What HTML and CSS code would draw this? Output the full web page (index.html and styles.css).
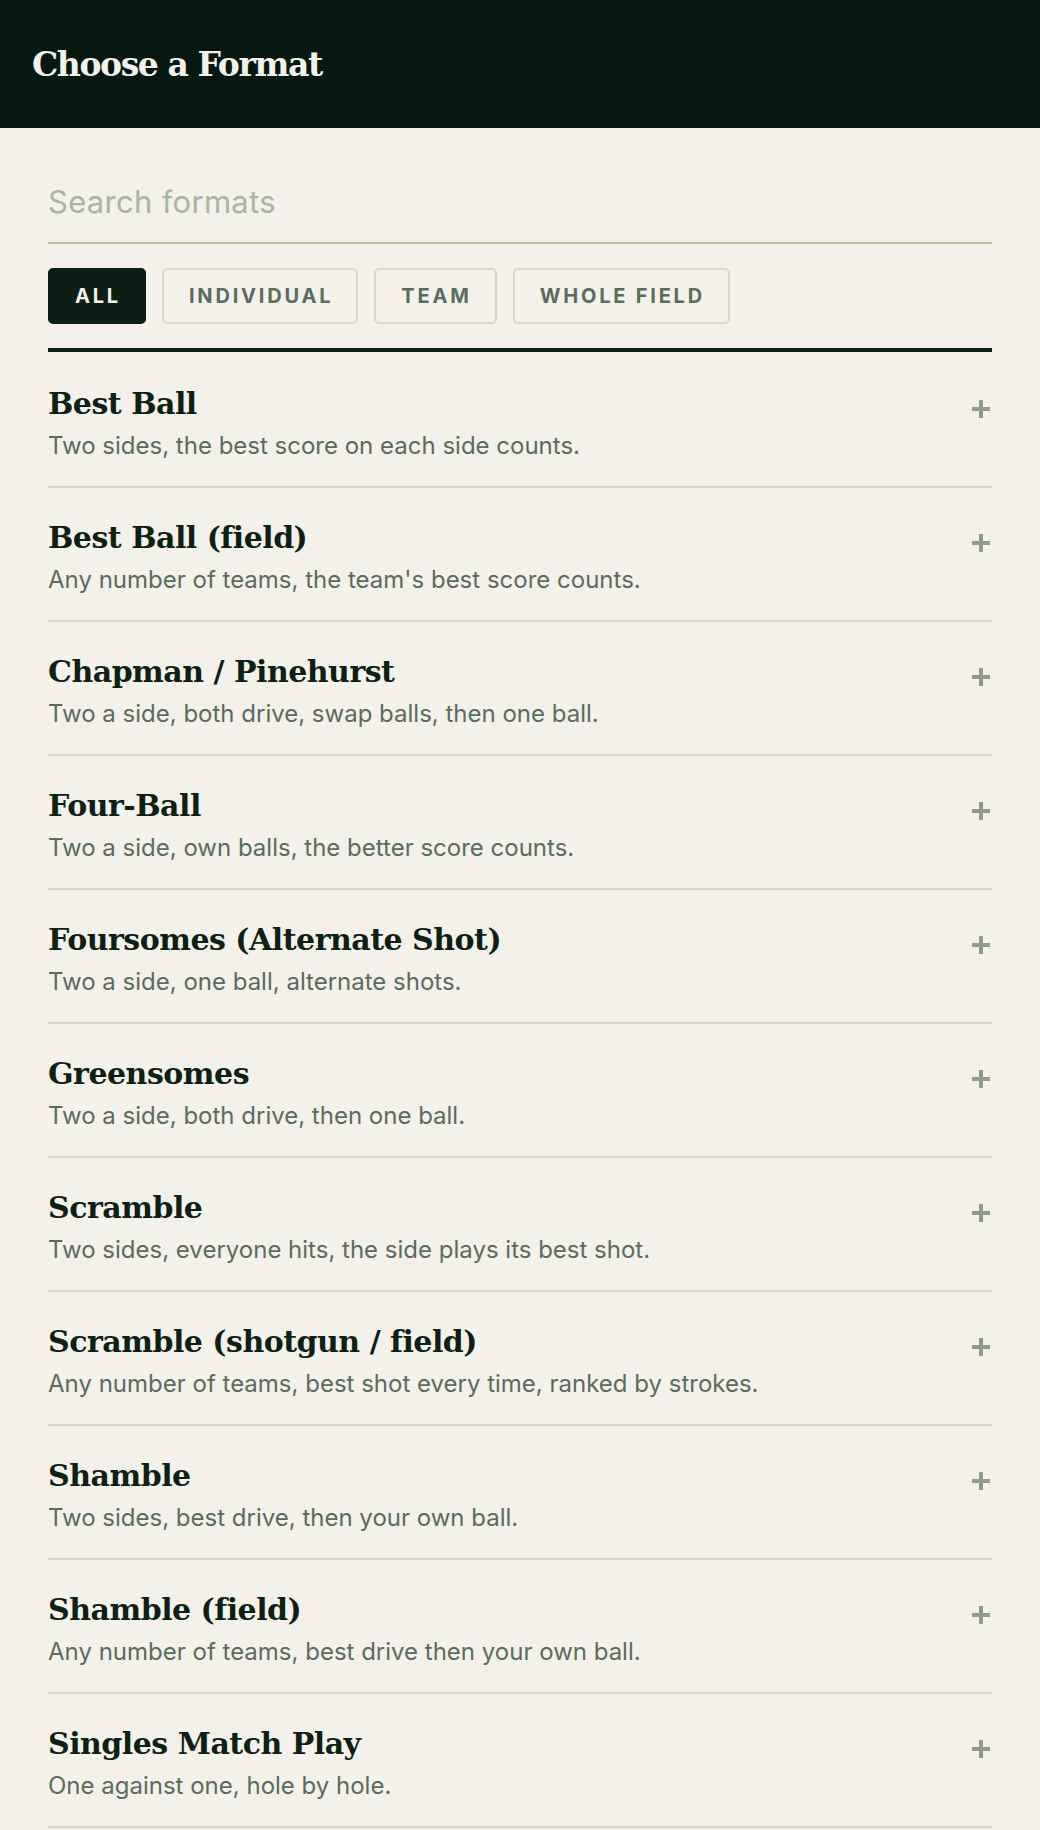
FILE: index.html
```html
<!DOCTYPE html>
<html lang="en">
<head>
  <meta charset="UTF-8">
  <title>Choose a Format</title>
  <link rel="stylesheet" href="styles.css">
</head>
<body>
  <header class="top-bar">
    <h1>Choose a Format</h1>
  </header>

  <main class="page">
    <input class="search" type="text" placeholder="Search formats">

    <div class="filters">
      <button class="chip active">ALL</button>
      <button class="chip">INDIVIDUAL</button>
      <button class="chip">TEAM</button>
      <button class="chip">WHOLE FIELD</button>
    </div>

    <ul class="format-list">
      <li class="format">
        <div class="format-text">
          <h2>Best Ball</h2>
          <p>Two sides, the best score on each side counts.</p>
        </div>
        <svg class="plus" viewBox="0 0 18 18"><rect x="7" y="0" width="4" height="18"/><rect x="0" y="7" width="18" height="4"/></svg>
      </li>
      <li class="format">
        <div class="format-text">
          <h2>Best Ball (field)</h2>
          <p>Any number of teams, the team's best score counts.</p>
        </div>
        <svg class="plus" viewBox="0 0 18 18"><rect x="7" y="0" width="4" height="18"/><rect x="0" y="7" width="18" height="4"/></svg>
      </li>
      <li class="format">
        <div class="format-text">
          <h2>Chapman / Pinehurst</h2>
          <p>Two a side, both drive, swap balls, then one ball.</p>
        </div>
        <svg class="plus" viewBox="0 0 18 18"><rect x="7" y="0" width="4" height="18"/><rect x="0" y="7" width="18" height="4"/></svg>
      </li>
      <li class="format">
        <div class="format-text">
          <h2>Four-Ball</h2>
          <p>Two a side, own balls, the better score counts.</p>
        </div>
        <svg class="plus" viewBox="0 0 18 18"><rect x="7" y="0" width="4" height="18"/><rect x="0" y="7" width="18" height="4"/></svg>
      </li>
      <li class="format">
        <div class="format-text">
          <h2>Foursomes (Alternate Shot)</h2>
          <p>Two a side, one ball, alternate shots.</p>
        </div>
        <svg class="plus" viewBox="0 0 18 18"><rect x="7" y="0" width="4" height="18"/><rect x="0" y="7" width="18" height="4"/></svg>
      </li>
      <li class="format">
        <div class="format-text">
          <h2>Greensomes</h2>
          <p>Two a side, both drive, then one ball.</p>
        </div>
        <svg class="plus" viewBox="0 0 18 18"><rect x="7" y="0" width="4" height="18"/><rect x="0" y="7" width="18" height="4"/></svg>
      </li>
      <li class="format">
        <div class="format-text">
          <h2>Scramble</h2>
          <p>Two sides, everyone hits, the side plays its best shot.</p>
        </div>
        <svg class="plus" viewBox="0 0 18 18"><rect x="7" y="0" width="4" height="18"/><rect x="0" y="7" width="18" height="4"/></svg>
      </li>
      <li class="format">
        <div class="format-text">
          <h2>Scramble (shotgun / field)</h2>
          <p>Any number of teams, best shot every time, ranked by strokes.</p>
        </div>
        <svg class="plus" viewBox="0 0 18 18"><rect x="7" y="0" width="4" height="18"/><rect x="0" y="7" width="18" height="4"/></svg>
      </li>
      <li class="format">
        <div class="format-text">
          <h2>Shamble</h2>
          <p>Two sides, best drive, then your own ball.</p>
        </div>
        <svg class="plus" viewBox="0 0 18 18"><rect x="7" y="0" width="4" height="18"/><rect x="0" y="7" width="18" height="4"/></svg>
      </li>
      <li class="format">
        <div class="format-text">
          <h2>Shamble (field)</h2>
          <p>Any number of teams, best drive then your own ball.</p>
        </div>
        <svg class="plus" viewBox="0 0 18 18"><rect x="7" y="0" width="4" height="18"/><rect x="0" y="7" width="18" height="4"/></svg>
      </li>
      <li class="format">
        <div class="format-text">
          <h2>Singles Match Play</h2>
          <p>One against one, hole by hole.</p>
        </div>
        <svg class="plus" viewBox="0 0 18 18"><rect x="7" y="0" width="4" height="18"/><rect x="0" y="7" width="18" height="4"/></svg>
      </li>
    </ul>
  </main>
</body>
</html>
```

FILE: styles.css
```css
:root {
  --bg: #f3f1e9;
  --ink: #0e1f16;
  --night: #071711;
  --muted: #5b6b5e;
  --line: #dbd5c1;
  --serif: 'DejaVu Serif', 'Liberation Serif', serif;
  --sans: Inter, 'Liberation Sans', sans-serif;
}

* {
  box-sizing: border-box;
}
body {
  margin: 0;
  background: var(--bg);
  color: var(--ink);
  font-family: var(--sans);
}

.top-bar {
  height: 128px;
  background: var(--night);
  display: flex;
  align-items: center;
  padding: 0 32px;
}
.top-bar h1 {
  margin: 0;
  color: var(--bg);
  font-family: var(--serif);
  font-size: 33px;
  font-weight: bold;
  letter-spacing: -1.4px;
}

.page {
  padding: 32px 48px 0;
}

.search {
  display: block;
  width: 100%;
  height: 84px;
  padding: 0;
  border: none;
  border-bottom: 2px solid #c3bda4;
  background: transparent;
  font-family: var(--sans);
  font-size: 31px;
  letter-spacing: 0.3px;
  color: var(--ink);
  outline: none;
}
.search::placeholder {
  color: #aab4a5;
}

.filters {
  display: flex;
  gap: 16px;
  margin-top: 24px;
  padding-bottom: 24px;
  border-bottom: 4px solid #0d1f15;
}
.chip {
  height: 56px;
  padding: 0 23px 0 25px;
  border: 2px solid #ddd6c1;
  border-radius: 5px;
  background: transparent;
  color: var(--muted);
  font-family: var(--sans);
  font-size: 20px;
  font-weight: 700;
  letter-spacing: 0.14em;
  cursor: pointer;
}
.chip.active {
  background: #0c1e15;
  border-color: #0c1e15;
  color: var(--bg);
}

.format-list {
  list-style: none;
  margin: 2px 0 0;
  padding: 0;
}
.format {
  height: 134px;
  display: flex;
  align-items: flex-start;
  padding-top: 32px;
  border-bottom: 2px solid var(--line);
}
.format-text {
  flex: 1;
}
.format h2 {
  margin: 0;
  font-family: var(--serif);
  font-size: 30px;
  line-height: 36px;
  font-weight: bold;
  letter-spacing: -0.5px;
}
.format p {
  margin: 8px 0 0;
  font-size: 24px;
  line-height: 32px;
  color: var(--muted);
}
.plus {
  width: 18px;
  height: 18px;
  margin: 14px 2px 0 0;
  fill: #8d9a8e;
}
```
